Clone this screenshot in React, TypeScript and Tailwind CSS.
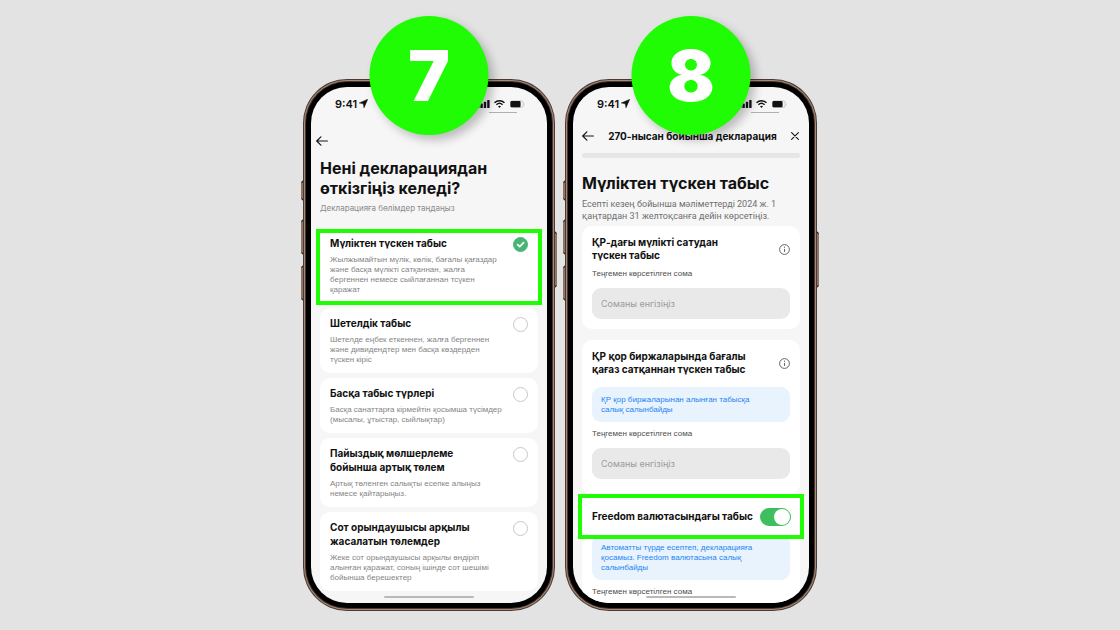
import { ReactNode } from "react";

function StatusBar() {
  return (
    <div className="flex h-4 items-center pt-px pl-6 pr-[22px]">
      <span className="text-[11px] leading-4 font-semibold">9:41</span>
      <svg className="ml-0.5 size-[9px]" viewBox="0 0 9 9" aria-hidden="true">
        <path d="M8.8 0.2 L5 8.9 L4.2 4.8 L0.1 4 Z" fill="#111" stroke="#111" strokeWidth="0.4" strokeLinejoin="round" />
      </svg>
      <span className="grow" />
      <svg className="h-2 w-[13px]" viewBox="0 0 13 8" fill="#17101c" aria-hidden="true">
        <rect x="0" y="5" width="2.4" height="3" rx="0.6" />
        <rect x="3.4" y="3.5" width="2.4" height="4.5" rx="0.6" />
        <rect x="6.8" y="1.8" width="2.4" height="6.2" rx="0.6" />
        <rect x="10.2" y="0" width="2.4" height="8" rx="0.6" />
      </svg>
      <svg className="ml-1 h-2 w-[11px]" viewBox="0 0 11 8" fill="none" stroke="#111" strokeWidth="1.4" aria-hidden="true">
        <path d="M0.5 2.8 C3.3 0.1 7.7 0.1 10.5 2.8" />
        <path d="M2.4 4.8 C4.2 3.1 6.8 3.1 8.6 4.8" />
        <path d="M4 6.3 C4.9 5.5 6.1 5.5 7 6.3 L5.5 7.9 Z" fill="#111" stroke="none" />
      </svg>
      <svg className="ml-[5px] h-2 w-[15px]" viewBox="0 0 15 8" aria-hidden="true">
        <rect x="0.4" y="0.9" width="12.8" height="6.6" rx="2" fill="none" stroke="#b5b5b5" strokeWidth="0.7" />
        <rect x="0.4" y="1.1" width="10.2" height="6.2" rx="1.4" fill="#111" />
        <path d="M14 3 Q15 4.2 14 5.4 Z" fill="#b5b5b5" />
      </svg>
    </div>
  );
}

function BackArrow() {
  return (
    <svg className="h-[10px] w-3" viewBox="0 0 12 10" fill="none" stroke="#161616" strokeWidth="1.2" strokeLinecap="round" strokeLinejoin="round" aria-hidden="true">
      <path d="M11.4 5 H0.8 M4.9 0.8 L0.7 5 L4.9 9.2" />
    </svg>
  );
}

function InfoIcon() {
  return (
    <svg className="size-[11px]" viewBox="0 0 11 11" fill="none" stroke="#555" strokeWidth="0.9" aria-hidden="true">
      <circle cx="5.5" cy="5.5" r="4.9" />
      <path d="M5.5 4.9 V8" />
      <circle cx="5.5" cy="3.2" r="0.6" fill="#555" stroke="none" />
    </svg>
  );
}

function Phone({ step, children }: { step: string; children: ReactNode }) {
  return (
    <section className="relative w-[252px]">
      <span className="absolute top-[101px] -left-0.5 h-[21px] w-1 rounded-l-sm border-y-2 border-[#2a201b] bg-[#8d7466]" />
      <span className="absolute top-[140px] -left-0.5 h-[36px] w-1 rounded-l-sm border-y-2 border-[#2a201b] bg-[#8d7466]" />
      <span className="absolute top-[186px] -left-0.5 h-[36px] w-1 rounded-l-sm border-y-2 border-[#2a201b] bg-[#8d7466]" />
      <span className="absolute top-[152px] -right-0.5 h-[57px] w-1 rounded-r-sm border-y-2 border-[#2a201b] bg-[#8d7466]" />
      <div className="relative rounded-[44px] bg-[#4b3a31] p-px">
        <div className="rounded-[43px] bg-[#a48a7b] p-px">
          <div className="rounded-[42px] bg-[#4a362c] p-px">
            <div className="rounded-[41px] bg-black p-[5px]">
              <div className="relative h-[516px] overflow-hidden rounded-[36px] bg-[#f6f6f6] pt-2">
                <StatusBar />
                <span className="absolute top-[25px] right-[30px] h-px w-7 bg-[#b0b0b0]" />
                {children}
                <span className="absolute bottom-[5px] left-1/2 h-0.5 w-[90px] -translate-x-1/2 rounded-full bg-[#b9b9b9]" />
              </div>
            </div>
          </div>
        </div>
      </div>
      <div className="absolute -top-[63px] left-1/2 flex size-[119px] -translate-x-1/2 items-center justify-center rounded-full bg-[#20fc04] shadow-[5px_5px_10px_rgba(0,0,0,0.24)]">
        <span className="text-[70px] leading-none font-black text-white">{step}</span>
      </div>
    </section>
  );
}

type Section = { title: string; text: string; checked?: boolean };

const sections: Section[] = [
  {
    title: "Мүліктен түскен табыс",
    text: "Жылжымайтын мүлік, көлік, бағалы қағаздар\nжәне басқа мүлікті сатқаннан, жалға\nбергеннен немесе сыйлағаннан тсүкен\nқаражат",
    checked: true,
  },
  {
    title: "Шетелдік табыс",
    text: "Шетелде еңбек еткеннен, жалға бергеннен\nжәне дивидендтер мен басқа көздерден\nтүскен кіріс",
  },
  {
    title: "Басқа табыс түрлері",
    text: "Басқа санаттарға кірмейтін қосымша түсімдер\n(мысалы, ұтыстар, сыйлықтар)",
  },
  {
    title: "Пайыздық мөлшерлеме\nбойынша артық төлем",
    text: "Артық төленген салықты есепке алыңыз\nнемесе қайтарыңыз.",
  },
  {
    title: "Сот орындаушысы арқылы\nжасалатын төлемдер",
    text: "Жеке сот орындаушысы арқылы өндіріп\nалынған қаражат, соның ішінде сот шешімі\nбойынша берешектер",
  },
];

function SectionCard({ title, text, checked }: Section) {
  return (
    <label
      className={
        checked
          ? "-mx-1 -mb-0.5 flex items-start justify-between border-4 border-[#20fc04] bg-white px-[10px] pt-[3px] pb-1.5"
          : "flex items-start justify-between rounded-[10px] bg-white px-[10px] py-2"
      }
    >
      <span className="whitespace-pre">
        <span className="block text-[10px] leading-[14px] font-bold">{title}</span>
        <span className="mt-[5px] block font-['Liberation_Sans',sans-serif] text-[8px] leading-[10px] text-[#858585]">{text}</span>
      </span>
      <span className="relative mt-px size-[15px] shrink-0">
        <input
          type="checkbox"
          defaultChecked={checked}
          className="peer block size-[15px] appearance-none rounded-full border-[1.5px] border-[#c8c8cc] bg-white checked:border-[#48b574] checked:bg-[#48b574]"
        />
        <svg className="pointer-events-none absolute inset-0 hidden size-[15px] peer-checked:block" viewBox="0 0 15 15" fill="none" stroke="#fff" strokeWidth="1.7" strokeLinecap="round" strokeLinejoin="round" aria-hidden="true">
          <path d="M4.6 7.6 L6.7 9.7 L10.6 5.6" />
        </svg>
      </span>
    </label>
  );
}

function AmountField({ id }: { id: string }) {
  return (
    <div>
      <label htmlFor={id} className="block font-['Liberation_Sans',sans-serif] text-[8px] leading-[10px] text-[#4c4c4c]">
        Теңгемен көрсетілген сома
      </label>
      <input
        id={id}
        placeholder="Соманы енгізіңіз"
        className="mt-[9px] block h-[31px] w-full rounded-[9px] bg-[#e9e9ea] px-[9px] text-[9px] placeholder:text-[#9b9b9d]"
      />
    </div>
  );
}

function CardTitle({ children }: { children: ReactNode }) {
  return (
    <div className="flex items-center justify-between">
      <h2 className="text-[10px] leading-[13px] font-bold whitespace-pre">{children}</h2>
      <button type="button" aria-label="Ақпарат">
        <InfoIcon />
      </button>
    </div>
  );
}

function Notice({ children }: { children: ReactNode }) {
  return (
    <p className="rounded-[9px] bg-[#e9f3fe] px-[9px] pt-2 pb-[7px] font-['Liberation_Sans',sans-serif] text-[8px] leading-[10px] whitespace-pre text-[#2385f2]">
      {children}
    </p>
  );
}

export default function App() {
  return (
    <main className="flex min-h-screen items-start justify-center gap-[10px] bg-[#e3e3e3] pt-[79px] font-['Inter',sans-serif] text-[#111]">
      <Phone step="7">
        <div className="px-[9px]">
          <button type="button" aria-label="Артқа" className="-ml-1 mt-[25px] block">
            <BackArrow />
          </button>
          <h1 className="mt-3 text-[16px] leading-5 font-bold whitespace-pre">{"Нені декларациядан\nөткізгіңіз келеді?"}</h1>
          <p className="mt-1 text-[8px] leading-3 text-[#8b8b8b]">Декларацияға бөлімдер таңдаңыз</p>
          <div className="mt-[15px] flex flex-col gap-[5px]">
            {sections.map((s) => (
              <SectionCard key={s.title} {...s} />
            ))}
          </div>
        </div>
      </Phone>

      <Phone step="8">
        <div className="px-[9px]">
          <header className="mt-[18px] flex items-center justify-between">
            <button type="button" aria-label="Артқа">
              <BackArrow />
            </button>
            <span className="text-[10px] leading-[14px] font-bold">270-нысан бойынша декларация</span>
            <button type="button" aria-label="Жабу" className="pr-px">
              <svg className="size-2" viewBox="0 0 8 8" stroke="#161616" strokeWidth="1.1" strokeLinecap="round" aria-hidden="true">
                <path d="M0.6 0.6 L7.4 7.4 M7.4 0.6 L0.6 7.4" />
              </svg>
            </button>
          </header>
          <div className="mt-[10px] h-[5px] rounded-full bg-[#e6e6e6]" />
          <h1 className="mt-[15px] text-[16px] leading-5 font-bold">Мүліктен түскен табыс</h1>
          <p className="mt-[5px] font-['Roboto',sans-serif] text-[9px] leading-3 whitespace-pre text-[#6f6f6f]">
            {"Есепті кезең бойынша мәліметтерді 2024 ж. 1\nқаңтардан 31 желтоқсанға дейін көрсетіңіз."}
          </p>
          <div className="mt-1 flex flex-col gap-[7px] rounded-[10px] bg-white p-[10px]">
            <CardTitle>{"ҚР-дағы мүлікті сатудан\nтүскен табыс"}</CardTitle>
            <AmountField id="property" />
          </div>
          <div className="mt-[11px] flex flex-col rounded-t-[10px] bg-white px-[10px] pt-[10px]">
            <CardTitle>{"ҚР қор биржаларында бағалы\nқағаз сатқаннан түскен табыс"}</CardTitle>
            <div className="mt-[11px] mb-[7px]">
              <Notice>{"ҚР қор биржаларынан алынған табысқа\nсалық салынбайды"}</Notice>
            </div>
            <AmountField id="exchange" />
          </div>
          <div className="h-[15px] rounded-b-[10px] bg-white" />
          <label className="relative z-10 -mx-1 flex h-[45px] items-center justify-between border-4 border-[#20fc04] bg-white px-[9px]">
            <span className="pl-px text-[10px] leading-[13px] font-bold whitespace-nowrap">Freedom валютасындағы табыс</span>
            <input
              type="checkbox"
              role="switch"
              defaultChecked
              className="flex h-[18px] w-[31px] shrink-0 appearance-none items-center rounded-full bg-[#c9c9cc] p-px before:block before:size-4 before:rounded-full before:bg-white checked:justify-end checked:bg-[#3cbf5c]"
            />
          </label>
          <div className="flex flex-col bg-white px-[10px] pb-5">
            <div className="-mt-1 mb-[7px]">
              <Notice>{"Автоматты түрде есептеп, декларацияға\nқосамыз. Freedom валютасына салық\nсалынбайды"}</Notice>
            </div>
            <AmountField id="freedom" />
          </div>
        </div>
      </Phone>
    </main>
  );
}
